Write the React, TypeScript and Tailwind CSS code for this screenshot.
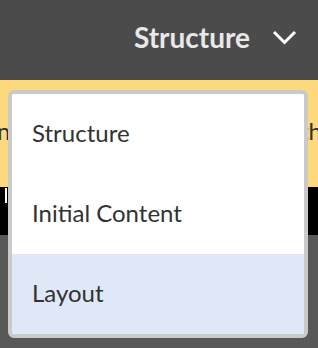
import React from 'react';

const items = ['Structure', 'Initial Content', 'Layout'];

export default function App() {
  return (
    <div
      className="relative w-[318px] h-[348px] overflow-hidden bg-[#585858]"
      style={{ fontFamily: 'Lato, "Open Sans", sans-serif' }}
    >
      <header className="h-[80px] bg-[#4b4b4b] flex items-center justify-end pr-[21px] pb-[6px]">
        <span className="text-[28px] font-bold text-[#e8e8e8]">Structure</span>
        <svg className="ml-[22px]" width="25" height="16" viewBox="0 0 25 16" fill="none">
          <path d="M2 3l10.5 10.5L23 3" stroke="#fff" strokeWidth="3" />
        </svg>
      </header>

      <div className="h-[107px] bg-[#fcd97c] flex items-start justify-between pt-[36px] text-[24px] text-[#323232] leading-[30px]">
        <span className="-ml-[3px]">n,</span>
        <span className="-mr-[4px]">th</span>
      </div>

      <div className="h-[48px] bg-black pl-[5px] pt-[1px]">
        <div className="w-[2px] h-[15px] bg-white" />
      </div>

      <div className="absolute left-[8px] top-[90px] w-[300px] rounded-[6px] border-4 border-[#cacaca] bg-white overflow-hidden">
        {items.map((label, i) => (
          <div
            key={label}
            className={`h-[80px] flex items-center pl-[20px] pb-[2px] text-[24px] text-[#323232] ${
              i === 2 ? 'bg-[#dfe8f6]' : 'bg-white'
            }`}
          >
            {label}
          </div>
        ))}
      </div>
    </div>
  );
}
